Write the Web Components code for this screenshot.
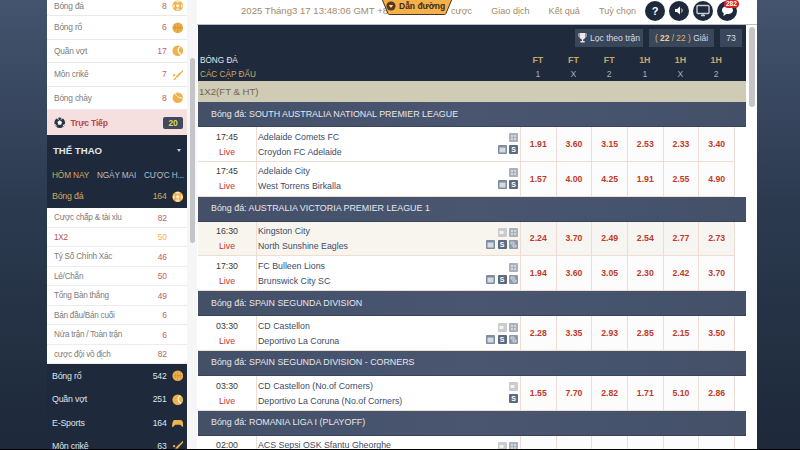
<!DOCTYPE html>
<html lang="vi">
<head>
<meta charset="utf-8">
<title>Thể thao</title>
<style>
    html, body { margin: 0; height: 450px; overflow: hidden; background: #000; }
</style>
</head>
<body>
<page-shell>
    <side-nav slot="nav"></side-nav>
    <main-board slot="main"></main-board>
</page-shell>

<script>
const FONT = "'Liberation Sans', Arial, sans-serif";

// small orange sport glyphs used all over the side menu
const sportIcon = (kind, color = '#efb04f') => {
    const shapes = {
        ball: `<circle cx="6" cy="6" r="5.6" fill="${color}"/><path d="M6 4.200l1.800 1.300-.7 2.100H4.900l-.7-2.100z" fill="#fff6e6"/><path d="M6 .8c1 0 2 .3 2.700 1L6 3 3.300 1.800C4 1.100 5 .8 6 .8zM.9 6.400c0-1 .4-2 1.100-2.800l1 2.600-1 2.400C1.300 8 .9 7.300.9 6.400zM11.100 6.400c0-1-.4-2-1.100-2.800L9 6.200l1 2.400c.7-.6 1.100-1.300 1.100-2.200zM4 10.700l.6-2h2.800l.6 2c-1.200.5-2.800.5-4 0z" fill="#fbe2b8"/>`,
        basket: `<circle cx="6" cy="6" r="5.600" fill="${color}"/><path d="M.6 6h10.800M6 .6v10.800M2.200 2.200c2 2.200 2 5.400 0 7.600M9.800 2.200c-2 2.200-2 5.400 0 7.600" stroke="#a8701f" stroke-width=".5" fill="none" opacity=".7"/>`,
        tennis: `<circle cx="6" cy="6" r="5.600" fill="${color}"/><path d="M8.800 1.800C5.800 2.800 5.400 8 9.400 9.800" stroke="#fff6e6" stroke-width="1.300" fill="none"/>`,
        cricket: `<path d="M11.800.6l-5 4.600 1.200 1.300 4.400-5z" fill="${color}"/><path d="M7 4.800L3.800 8.200l1.300 1.300 3.300-3.300z" fill="${color}"/><path d="M4.200 9.200L2 11.300" stroke="${color}" stroke-width="1.400"/><circle cx="2.200" cy="6.400" r="1.200" fill="${color}"/>`,
        base: `<circle cx="6" cy="6" r="5.400" fill="${color}"/><path d="M3.400 1.400c.4 2.400 3.600 5 7.200 5" stroke="#fff6e6" stroke-width="1" fill="none"/>`,
        game: `<path d="M3 3h6c1.600 0 2.600 1.600 3 6.600 0 1-1 1-1.600.3L8.600 8H3.400L1.600 9.900C1 10.600 0 10.600 0 9.600.4 4.600 1.400 3 3 3z" fill="${color}"/>`,
        live: `<circle cx="6" cy="6" r="5.600" fill="#2c3442"/><path d="M6 3.400l2.400 1.800-.9 2.800h-3l-.9-2.800z" fill="#fff"/><path d="M1 7.400l1.800 2.400M11 7.400L9.200 9.800M3 1.400l2 1M9 1.400l-2 1" stroke="#fff" stroke-width="1"/>`
    };
    return `<svg width="11.500" height="11.500" viewBox="0 0 12 12">${shapes[kind] || ''}</svg>`;
};

class PageShell extends HTMLElement {
    constructor() {
        super();
        this.attachShadow({ mode: 'open' });
        this.shadowRoot.innerHTML = `
            <style>
                :host {
                    display: block;
                    height: 449px;
                    overflow: hidden;
                    font-family: ${FONT};
                    background: linear-gradient(180deg, #44546e 0%, #2c3a50 45%, #1d2939 100%);
                }
                .wrap {
                    display: grid;
                    grid-template-columns: 47px 140px 570px 43px;
                    height: 449px;
                }
            </style>
            <div class="wrap">
                <div></div>
                <slot name="nav"></slot>
                <slot name="main"></slot>
                <div></div>
            </div>
        `;
    }
}

class SportRow extends HTMLElement {
    connectedCallback() {
        const root = this.attachShadow({ mode: 'open' });
        root.innerHTML = `
            <style>
                :host {
                    display: flex;
                    align-items: center;
                    box-sizing: border-box;
                    height: 23.300px;
                    padding: 0 4px 0 5px;
                    font-size: 8.800px;
                    letter-spacing: -.2px;
                    color: #dfe3e8;
                }
                :host([light]) {
                    padding: 0 4px 0 7px;
                    background: #fff;
                    border-bottom: 1px solid #e9e9e9;
                    color: #7c7c7c;
                    font-size: 8.400px;
                }
                :host([active]) { color: #d3a860; height: 24px; }
                .name { flex: 1; }
                .count { margin-right: 5px; font-size: 8.600px; }
                :host([light]) .count { color: #b5646f; }
                svg { display: block; }
            </style>
            <span class="name">${this.getAttribute('name')}</span>
            <span class="count">${this.getAttribute('count')}</span>
            ${sportIcon(this.getAttribute('icon'))}
        `;
    }
}

class MarketRow extends HTMLElement {
    connectedCallback() {
        const root = this.attachShadow({ mode: 'open' });
        root.innerHTML = `
            <style>
                :host {
                    display: flex;
                    align-items: center;
                    box-sizing: border-box;
                    height: 19.500px;
                    padding: 0 20px 0 7px;
                    background: #fff;
                    border-bottom: 1px solid #ececec;
                    font-size: 8.200px;
                    letter-spacing: -.25px;
                    color: #7c7c7c;
                }
                :host([current]) { color: #b5525c; }
                .name { flex: 1; }
                .count { color: #b5646f; font-size: 8.400px; letter-spacing: 0; }
                :host([current]) .count { color: #eeb264; }
            </style>
            <span class="name">${this.getAttribute('name')}</span>
            <span class="count">${this.getAttribute('count')}</span>
        `;
    }
}

class SideNav extends HTMLElement {
    constructor() {
        super();
        this.attachShadow({ mode: 'open' });
        const quick = [['Bóng đá', 8, 'ball'], ['Bóng rổ', 6, 'basket'], ['Quần vợt', 17, 'tennis'], ['Môn crikê', 7, 'cricket'], ['Bóng chày', 8, 'base']];
        const markets = [['Cược chấp & tài xỉu', 82], ['1X2', 50, true], ['Tỷ Số Chính Xác', 46], ['Lẻ/Chẵn', 50], ['Tổng Bàn thắng', 49], ['Bán đầu/Bán cuối', 6], ['Nửa trận / Toàn trận', 6], ['cược đội vô địch', 82]];
        const more = [['Bóng rổ', 542, 'basket'], ['Quần vợt', 251, 'tennis'], ['E-Sports', 164, 'game'], ['Môn crikê', 63, 'cricket']];
        this.shadowRoot.innerHTML = `
            <style>
                :host { display: block; background: #1e2a3b; overflow: hidden; }
                .quick sport-row { height: 23.600px; }
                .quick sport-row:first-child { height: 16px; align-items: flex-end; padding-bottom: 4px; }
                .live {
                    display: flex;
                    align-items: center;
                    height: 25px;
                    padding: 0 4px 0 7px;
                    background: #f6dfdf;
                    color: #b5484f;
                    font-size: 8.600px;
                    letter-spacing: -.2px;
                    font-weight: bold;
                    gap: 5px;
                }
                .live span { flex: 1; }
                .live b {
                    width: 20px;
                    height: 12px;
                    line-height: 12px;
                    border-radius: 2px;
                    background: #3f4a5e;
                    color: #d9dc50;
                    text-align: center;
                    font-size: 8.500px;
                }
                .title {
                    display: flex;
                    align-items: center;
                    justify-content: space-between;
                    height: 31px;
                    padding: 0 6px 0 6px;
                    color: #e2e5ea;
                    font-size: 9.600px;
                    font-weight: bold;
                }
                .title i {
                    border: 2.500px solid transparent;
                    border-top: 3px solid #c8ccd2;
                    border-bottom: 0;
                }
                .tabs {
                    display: flex;
                    height: 18px;
                    align-items: center;
                    justify-content: space-between;
                    padding: 0 3px 0 5px;
                    font-size: 8.300px;
                    letter-spacing: -.15px;
                    color: #b8bec6;
                }
                .tabs .on { color: #d3a860; }
            </style>
            <div class="quick">
                ${quick.map(q => `<sport-row light name="${q[0]}" count="${q[1]}" icon="${q[2]}"></sport-row>`).join('')}
            </div>
            <div class="live">${sportIcon('live')}<span>Trực Tiếp</span><b>20</b></div>
            <div class="title">THỂ THAO<i></i></div>
            <div class="tabs"><span class="on">HÔM NAY</span><span>NGÀY MAI</span><span>CƯỢC H...</span></div>
            <sport-row active name="Bóng đá" count="164" icon="ball"></sport-row>
            <div>
                ${markets.map(m => `<market-row name="${m[0]}" count="${m[1]}" ${m[2] ? 'current' : ''}></market-row>`).join('')}
            </div>
            ${more.map(m => `<sport-row name="${m[0]}" count="${m[1]}" icon="${m[2]}"></sport-row>`).join('')}
        `;
    }
}

class ScrollThumb extends HTMLElement {
    connectedCallback() {
        const root = this.attachShadow({ mode: 'open' });
        root.innerHTML = `
            <style>
                :host { display: block; }
                div {
                    width: 5.500px;
                    margin-top: ${this.getAttribute('top')}px;
                    height: ${this.getAttribute('size')}px;
                    border-radius: 3px;
                    background: #c3c5c8;
                }
            </style>
            <div></div>
        `;
    }
}

class TopBar extends HTMLElement {
    constructor() {
        super();
        this.attachShadow({ mode: 'open' });
        this.shadowRoot.innerHTML = `
            <style>
                :host {
                    position: relative;
                    display: flex;
                    align-items: center;
                    box-sizing: border-box;
                    height: 25px;
                    padding: 0 20px 3px 54px;
                    background: #fff;
                    border-bottom: 1px solid #b9bec6;
                    font-size: 9.600px;
                    color: #a58a6b;
                }
                .date { width: 210px; }
                .nav { display: flex; gap: 19px; font-size: 9.100px; }
                .tools { display: flex; gap: 4px; margin-left: auto; }
                .tool {
                    width: 20px;
                    height: 20px;
                    border-radius: 50%;
                    background: #1e2a3b;
                    display: flex;
                    align-items: center;
                    justify-content: center;
                    color: #fff;
                    font-weight: bold;
                    font-size: 11px;
                }
                .guide {
                    position: absolute;
                    left: 192px;
                    top: -1px;
                    width: 76px;
                    height: 17px;
                }
                .guide svg { position: absolute; left: 0; top: 0; }
                .guide span {
                    position: absolute;
                    left: 20px;
                    top: 0;
                    line-height: 14px;
                    font-size: 8.500px;
                    font-weight: bold;
                    color: #3a2a18;
                    white-space: nowrap;
                }
                .badge {
                    position: absolute;
                    left: 537px;
                    top: 0;
                    padding: 0 2px;
                    height: 8px;
                    line-height: 8px;
                    border-radius: 4px;
                    background: #d8232a;
                    color: #fff;
                    font-size: 6.500px;
                    font-weight: bold;
                }
            </style>
            <span class="date">2025 Tháng3 17 13:48:06 GMT +8</span>
            <div class="nav">
                <span>cược</span><span>Giao dịch</span><span>Kết quả</span><span>Tuỳ chọn</span>
            </div>
            <div class="tools">
                <div class="tool">?</div>
                <div class="tool"><svg width="11" height="11" viewBox="0 0 11 11"><path d="M1 4h2l3-2.500v8L3 7H1z" fill="#fff"/><path d="M7.400 3.600c.9 1 .9 2.800 0 3.800" stroke="#fff" fill="none"/></svg></div>
                <div class="tool"><svg width="14" height="13" viewBox="0 0 14 13"><rect x="1" y="1.500" width="12" height="8" rx="1" fill="none" stroke="#c9ced6" stroke-width="1.400"/><path d="M5 11.500h4M7 9.500v2" stroke="#c9ced6" stroke-width="1.400"/></svg></div>
                <div class="tool"><svg width="13" height="13" viewBox="0 0 13 13"><path d="M6.500 2C3.400 2 1 3.800 1 6.200c0 1.300.7 2.400 1.800 3.100L2.400 12l3-1.900h1.100c3.100 0 5.500-1.700 5.500-3.900S9.600 2 6.500 2z" fill="#fff"/></svg></div>
            </div>
            <div class="guide">
                <svg width="76" height="17" viewBox="0 0 76 17"><path d="M3 0h70l-6 14.500c-.3.7-.8 1-1.500 1h-55c-.7 0-1.200-.3-1.500-1z" fill="#f4b04a" stroke="#4a3418" stroke-width="1"/><circle cx="12" cy="7" r="4.600" fill="#5a3a1c"/><path d="M9.800 6h4.400L12 9z" fill="#f8d79a"/></svg>
                <span>Dẫn đường</span>
            </div>
            <span class="badge">282</span>
        `;
    }
}

class BoardHead extends HTMLElement {
    constructor() {
        super();
        this.attachShadow({ mode: 'open' });
        const cols = [['FT', '1'], ['FT', 'X'], ['FT', '2'], ['1H', '1'], ['1H', 'X'], ['1H', '2']];
        this.shadowRoot.innerHTML = `
            <style>
                :host {
                    display: block;
                    box-sizing: border-box;
                    height: 56px;
                    padding-top: 4px;
                    background: #1f2b3c;
                    font-size: 8.600px;
                }
                .filters {
                    display: flex;
                    justify-content: flex-end;
                    gap: 6px;
                    height: 18px;
                    padding-right: 4px;
                    margin-bottom: 6px;
                    color: #d8dce2;
                }
                .filters div {
                    display: flex;
                    align-items: center;
                    justify-content: center;
                    gap: 3px;
                    background: #3a4659;
                    white-space: pre;
                }
                .filters .gold { color: #d9b27a; gap: 0; font-size: 8.400px; }
                .filters b { color: #eccd96; }
                .cols {
                    display: grid;
                    grid-template-columns: 322px repeat(6, 35.67px);
                    grid-auto-rows: 14px;
                    align-items: center;
                }
                .name { padding-left: 2px; color: #e6e8ec; font-size: 8.200px; }
                .pairs { padding-left: 2px; color: #d3a860; font-size: 8.200px; }
                .top { text-align: center; color: #c9a468; font-weight: bold; font-size: 8.800px; }
                .low { text-align: center; color: #a9aeb6; }
            </style>
            <div class="filters">
                <div style="width:68px"><svg width="9" height="10" viewBox="0 0 9 10"><path d="M1.600 0h5.800v3.400c0 1.600-1.200 2.800-2.300 3V8h1.600v1.400H2.400V8H4V6.400C2.800 6.200 1.600 5 1.600 3.400z" fill="#e6e8ec"/><path d="M1.600 1H0c0 2 .8 3 2 3.200M7.400 1H9c0 2-.8 3-2 3.200" stroke="#e6e8ec" stroke-width=".7" fill="none"/></svg>Lọc theo trận</div>
                <div style="width:65px" class="gold">( <b>22</b> / 22 ) <span style="color:#d8dce2">Giải</span></div>
                <div style="width:22px">73</div>
            </div>
            <div class="cols">
                <div class="name">BÓNG ĐÁ</div>
                ${cols.map(c => `<div class="top">${c[0]}</div>`).join('')}
                <div class="pairs">CÁC CẶP ĐẤU</div>
                ${cols.map(c => `<div class="low">${c[1]}</div>`).join('')}
            </div>
        `;
    }
}

class LeagueBar extends HTMLElement {
    connectedCallback() {
        const root = this.attachShadow({ mode: 'open' });
        root.innerHTML = `
            <style>
                :host {
                    display: flex;
                    align-items: center;
                    box-sizing: border-box;
                    height: 25px;
                    padding: 0 0 1px 13px;
                    background: linear-gradient(90deg, #435068, #4a5670 50%, #435068);
                    border-bottom: 1px solid #37445a;
                    color: #e6e8ec;
                    font-size: 8.900px;
                }
            </style>
            <slot></slot>
        `;
    }
}

// the tiny grey market markers at the end of the team cell
const marker = (kind) => {
    const shapes = {
        g: `<rect width="9" height="9" rx="1" fill="#a9b1bc"/><path d="M2 2h2v2H2zM5 2h2v2H5zM2 5h2v2H2zM5 5h2v2H5z" fill="#d3d7dc"/>`,
        b: `<rect width="9" height="9" rx="1" fill="#7f8da1"/><rect x="1.500" y="2.500" width="6" height="5" fill="#d5dae0"/>`,
        l: `<rect width="9" height="9" rx="1" fill="#c9cbcc"/><rect x="1.500" y="3" width="4" height="3" fill="#f4f4f4"/>`,
        h: `<rect width="9" height="9" rx="1" fill="#8e9aab"/><path d="M2 2h3v2H2zM4 5h3v2H4z" fill="none" stroke="#e2e5e9" stroke-width=".8"/>`
    };
    if (kind === 's') return `<span class="s">S</span>`;
    return `<svg width="9" height="9" viewBox="0 0 9 9">${shapes[kind]}</svg>`;
};

class MatchRow extends HTMLElement {
    connectedCallback() {
        const root = this.attachShadow({ mode: 'open' });
        const odds = this.getAttribute('odds').split(' ');
        const [top, low] = this.getAttribute('marks').split('|');
        root.innerHTML = `
            <style>
                :host {
                    display: grid;
                    grid-template-columns: 58px 264px repeat(6, 35.67px) 12px;
                    box-sizing: border-box;
                    height: 34.800px;
                    background: #fff;
                    border-bottom: 1px solid #efdcd2;
                    font-size: 8.800px;
                }
                :host([tint]) { background: #f8f5ee; }
                .time {
                    display: flex;
                    flex-direction: column;
                    justify-content: center;
                    align-items: center;
                    padding-top: 1.500px;
                    line-height: 15px;
                    color: #3a3a3a;
                }
                .time em { font-style: normal; color: #c5362f; }
                .teams {
                    display: flex;
                    justify-content: space-between;
                    align-items: center;
                    border-left: 1px solid #efdcd2;
                    padding: 0 2px 0 1px;
                    color: #3d4c68;
                    line-height: 15px;
                }
                .names { padding-top: 1.500px; }
                .marks { display: flex; flex-direction: column; gap: 3px; align-items: flex-end; }
                .marks div { display: flex; gap: 2.500px; height: 9px; }
                .marks svg { display: block; }
                .s {
                    width: 9px;
                    height: 9px;
                    line-height: 9px;
                    border-radius: 1px;
                    background: #5c6a7e;
                    color: #fff;
                    text-align: center;
                    font-size: 7px;
                    font-weight: bold;
                }
                .odd {
                    display: flex;
                    align-items: center;
                    justify-content: center;
                    border-left: 1px solid #efdcd2;
                    background: rgba(245, 245, 245, .35);
                    color: #bf3a2b;
                    font-weight: bold;
                    font-size: 8.700px;
                }
                .tail { border-left: 1px solid #efdcd2; background: #fff; margin-bottom: -1px; }
            </style>
            <div class="time">${this.getAttribute('time')}<em>Live</em></div>
            <div class="teams">
                <div class="names"><div>${this.getAttribute('home')}</div><div>${this.getAttribute('away')}</div></div>
                <div class="marks">
                    <div>${[...top].map(marker).join('')}</div>
                    <div>${[...low].map(marker).join('')}</div>
                </div>
            </div>
            ${odds.map(o => `<div class="odd">${o}</div>`).join('')}
            <div class="tail"></div>
        `;
    }
}

class MainBoard extends HTMLElement {
    constructor() {
        super();
        this.attachShadow({ mode: 'open' });
        this.shadowRoot.innerHTML = `
            <style>
                :host {
                    display: grid;
                    grid-template-columns: 10px 1fr;
                    grid-template-rows: 25px 1fr;
                    background: #fff;
                    overflow: hidden;
                }
                top-bar { grid-column: 1 / 3; }
                .gutter { background: #f6f6f6; padding-left: 2.500px; margin-top: -25px; position: relative; }
                .content { display: grid; grid-template-columns: 1px 548px 3px 5.500px; grid-template-rows: 1fr; overflow: hidden; }
                .sheet { grid-column: 2; overflow: hidden; }
                .rail { grid-column: 4; }
                .market {
                    display: flex;
                    align-items: center;
                    height: 21px;
                    padding-left: 1px;
                    background: #cfcbb5;
                    color: #6f6650;
                    font-size: 9.600px;
                }
            </style>
            <top-bar></top-bar>
            <div class="gutter"><scroll-thumb top="58" size="185"></scroll-thumb></div>
            <div class="content">
                <div class="sheet">
                    <board-head></board-head>
                    <div class="market">1X2(FT &amp; HT)</div>
                    <league-bar>Bóng đá: SOUTH AUSTRALIA NATIONAL PREMIER LEAGUE</league-bar>
                    <match-row time="17:45" home="Adelaide Comets FC" away="Croydon FC Adelaide" marks="g|bs" odds="1.91 3.60 3.15 2.53 2.33 3.40"></match-row>
                    <match-row time="17:45" home="Adelaide City" away="West Torrens Birkalla" marks="g|bs" odds="1.57 4.00 4.25 1.91 2.55 4.90"></match-row>
                    <league-bar>Bóng đá: AUSTRALIA VICTORIA PREMIER LEAGUE 1</league-bar>
                    <match-row tint time="16:30" home="Kingston City" away="North Sunshine Eagles" marks="lg|bsh" odds="2.24 3.70 2.49 2.54 2.77 2.73"></match-row>
                    <match-row time="17:30" home="FC Bulleen Lions" away="Brunswick City SC" marks="g|bsh" odds="1.94 3.60 3.05 2.30 2.42 3.70"></match-row>
                    <league-bar>Bóng đá: SPAIN SEGUNDA DIVISION</league-bar>
                    <match-row time="03:30" home="CD Castellon" away="Deportivo La Coruna" marks="lg|bsh" odds="2.28 3.35 2.93 2.85 2.15 3.50"></match-row>
                    <league-bar>Bóng đá: SPAIN SEGUNDA DIVISION - CORNERS</league-bar>
                    <match-row time="03:30" home="CD Castellon (No.of Corners)" away="Deportivo La Coruna (No.of Corners)" marks="l|s" odds="1.55 7.70 2.82 1.71 5.10 2.86"></match-row>
                    <league-bar>Bóng đá: ROMANIA LIGA I (PLAYOFF)</league-bar>
                    <match-row time="02:00" home="ACS Sepsi OSK Sfantu Gheorghe" away="&nbsp;" marks="lg|bsh" odds="&nbsp; &nbsp; &nbsp; &nbsp; &nbsp; &nbsp;"></match-row>
                </div>
                <div class="rail"><scroll-thumb top="2" size="80"></scroll-thumb></div>
            </div>
        `;
    }
}

customElements.define('page-shell', PageShell);
customElements.define('sport-row', SportRow);
customElements.define('market-row', MarketRow);
customElements.define('side-nav', SideNav);
customElements.define('scroll-thumb', ScrollThumb);
customElements.define('top-bar', TopBar);
customElements.define('board-head', BoardHead);
customElements.define('league-bar', LeagueBar);
customElements.define('match-row', MatchRow);
customElements.define('main-board', MainBoard);
</script>
</body>
</html>
